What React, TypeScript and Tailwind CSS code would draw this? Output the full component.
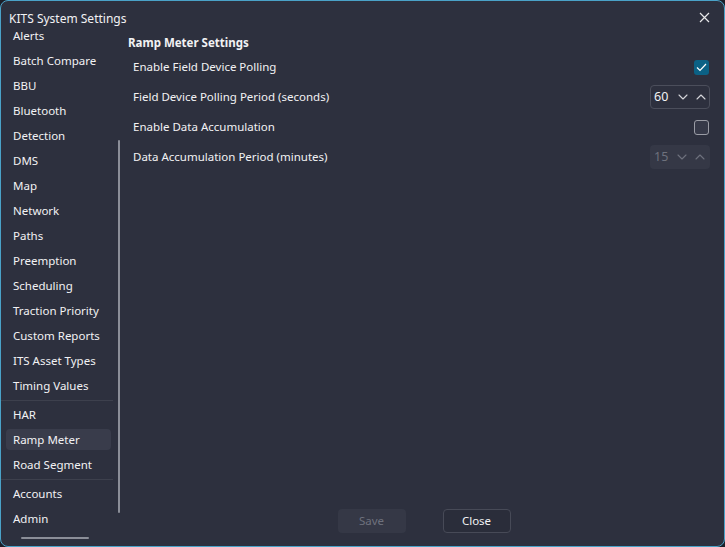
import React from "react";

const items = [
  "Alerts",
  "Batch Compare",
  "BBU",
  "Bluetooth",
  "Detection",
  "DMS",
  "Map",
  "Network",
  "Paths",
  "Preemption",
  "Scheduling",
  "Traction Priority",
  "Custom Reports",
  "ITS Asset Types",
  "Timing Values",
];

function Chevron({ up, color }: { up?: boolean; color: string }) {
  return (
    <svg width="10" height="6" viewBox="0 0 10 6" fill="none">
      <path
        d={up ? "M1 5 L5 1 L9 5" : "M1 1 L5 5 L9 1"}
        stroke={color}
        strokeWidth="1.1"
        strokeLinecap="round"
        strokeLinejoin="round"
      />
    </svg>
  );
}

function Item({ label, selected }: { label: string; selected?: boolean }) {
  return (
    <div className="h-[25px] flex items-center">
      <div
        className={
          "h-[21px] w-[105px] ml-[5px] pl-[7px] flex items-center rounded-[4px] " +
          (selected ? "bg-[#393c4b]" : "")
        }
      >
        {label}
      </div>
    </div>
  );
}

export default function App() {
  return (
    <div
      className="w-[725px] h-[547px] bg-[#1c1e28] text-[#f2f2f4] text-[11.5px] overflow-hidden"
      style={{ fontFamily: '"Noto Sans", "Open Sans", sans-serif' }}
    >
      <div className="w-full h-full border border-[#4aa2c8] rounded-[8px] bg-[#2d303e] flex flex-col relative">
        {/* title bar */}
        <div className="h-[28px] flex items-center justify-between pl-[8px] pr-[14px] shrink-0">
          <span className="text-[12px] mt-[7px]">KITS System Settings</span>
          <svg width="11" height="11" viewBox="0 0 11 11" className="mt-[4px]">
            <path d="M1 1 L10 10 M10 1 L1 10" stroke="#e8e8ea" strokeWidth="1.2" />
          </svg>
        </div>
        <div className="flex flex-1 min-h-0">
          {/* sidebar */}
          <div className="w-[120px] shrink-0 relative">
            <div className="absolute inset-x-0 top-[3px] bottom-0 overflow-hidden">
              <div className="-mt-[9px]">
                {items.map((i) => (
                  <Item key={i} label={i} />
                ))}
                <div className="h-[4px] flex items-center">
                  <div className="h-[1px] bg-[#3d404d] w-[112px]" />
                </div>
                <Item label="HAR" />
                <Item label="Ramp Meter" selected />
                <Item label="Road Segment" />
                <div className="h-[4px] flex items-center">
                  <div className="h-[1px] bg-[#3d404d] w-[112px]" />
                </div>
                <Item label="Accounts" />
                <Item label="Admin" />
              </div>
            </div>
            <div className="absolute right-[1px] top-[111px] w-[2px] h-[373px] bg-[#8b8e98] rounded-full" />
            <div className="absolute left-[20px] bottom-[7px] w-[68px] h-[2px] bg-[#8b8e98] rounded-full" />
          </div>
          {/* content */}
          <div className="flex-1 flex flex-col pl-[7px] pr-[14px]">
            <div className="font-bold text-[11.5px] mt-[5px] h-[18px] flex items-center">
              Ramp Meter Settings
            </div>
            <div className="pl-[5px]">
              <div className="h-[30px] flex items-center justify-between">
                <span>Enable Field Device Polling</span>
                <div className="w-[15px] h-[15px] rounded-[3px] bg-[#0b6185] flex items-center justify-center mr-[1px]">
                  <svg width="11" height="9" viewBox="0 0 11 9">
                    <path d="M1 4.5 L4 7.5 L10 1" stroke="#ffffff" strokeWidth="1.2" fill="none" />
                  </svg>
                </div>
              </div>
              <div className="h-[30px] flex items-center justify-between">
                <span>Field Device Polling Period (seconds)</span>
                <div className="w-[60px] h-[24px] border border-[#4b4e5b] rounded-[4px] flex items-center pl-[3px] text-[12.5px]">
                  <span className="w-[24px]">60</span>
                  <Chevron color="#d5d6da" />
                  <span className="w-[8px]" />
                  <Chevron up color="#d5d6da" />
                </div>
              </div>
              <div className="h-[30px] flex items-center justify-between">
                <span>Enable Data Accumulation</span>
                <div className="w-[15px] h-[15px] rounded-[3px] border border-[#9a9ca5] bg-[#363948] mr-[1px]" />
              </div>
              <div className="h-[30px] flex items-center justify-between">
                <span>Data Accumulation Period (minutes)</span>
                <div className="w-[60px] h-[24px] rounded-[4px] bg-[#353846] flex items-center pl-[4px] text-[12.5px] text-[#6e717d]">
                  <span className="w-[23px]">15</span>
                  <Chevron color="#6e717d" />
                  <span className="w-[8px]" />
                  <Chevron up color="#6e717d" />
                </div>
              </div>
            </div>
            <div className="flex-1" />
            <div className="flex justify-center gap-[37px] mb-[13px] ml-[10px]">
              <div className="w-[68px] h-[24px] rounded-[4px] bg-[#353846] text-[#6e717d] flex items-center justify-center">
                Save
              </div>
              <div className="w-[68px] h-[24px] rounded-[4px] border border-[#474a57] bg-[#2a2d3a] flex items-center justify-center">
                Close
              </div>
            </div>
          </div>
        </div>
      </div>
    </div>
  );
}
